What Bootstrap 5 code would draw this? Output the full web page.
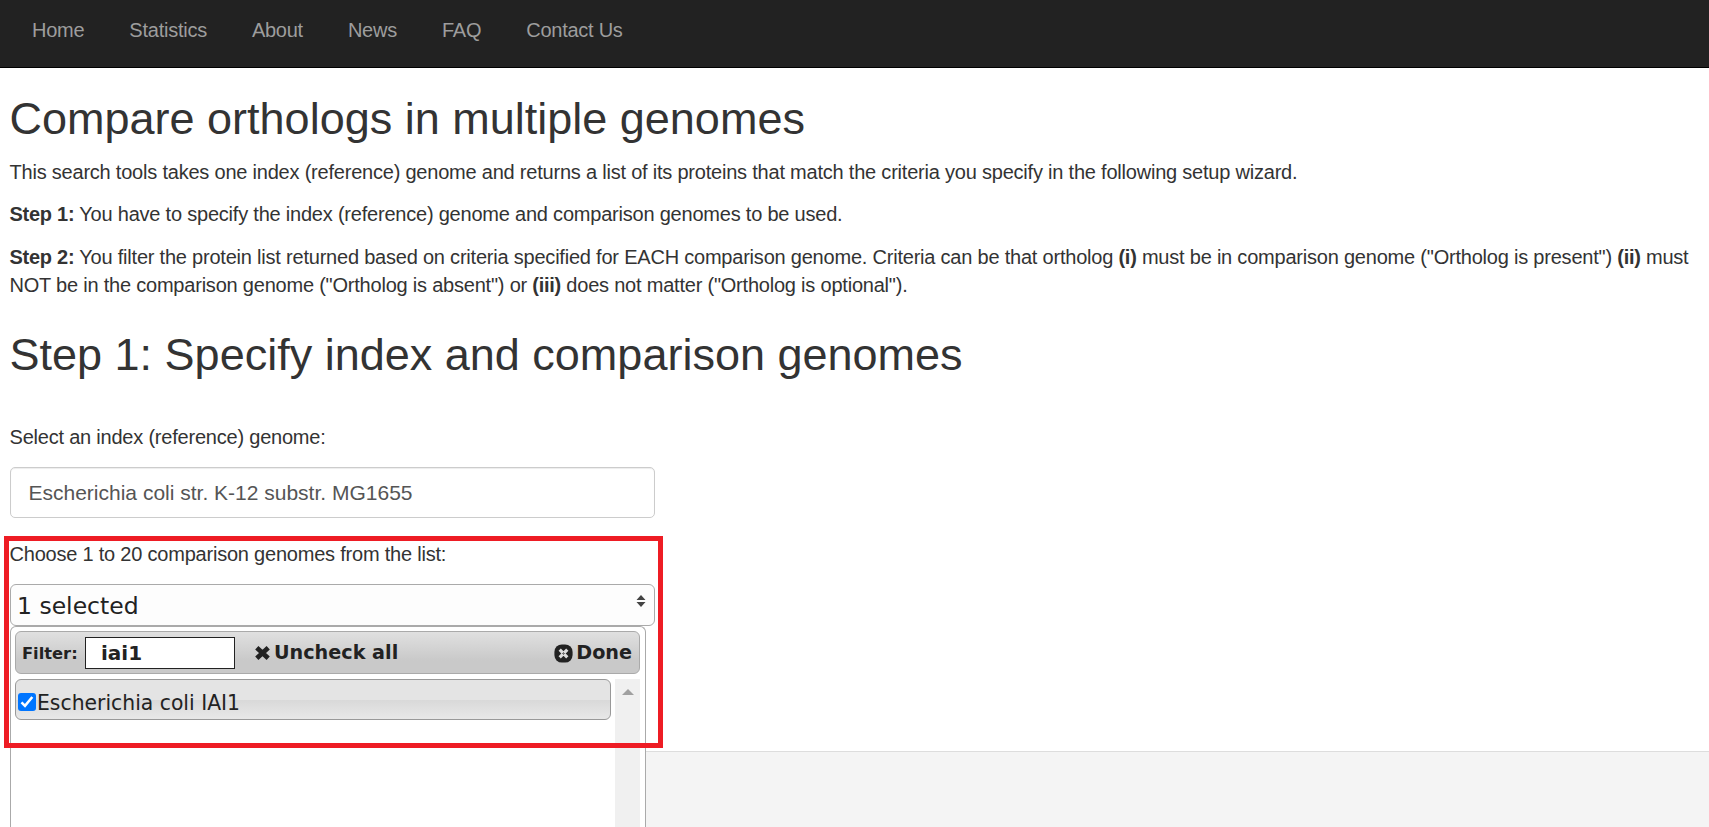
<!DOCTYPE html>
<html lang="en">
<head>
<meta charset="utf-8">
<meta name="viewport" content="width=device-width, initial-scale=1">
<title>Compare orthologs in multiple genomes</title>
<link href="https://cdn.jsdelivr.net/npm/bootstrap@5.3.0/dist/css/bootstrap.min.css" rel="stylesheet">
<style>
html, body { height: 100%; overflow: hidden; }
body { font-family: "Liberation Sans", Arial, sans-serif; font-size: 20px; line-height: 28.57px; color: #333; letter-spacing: -.213px; }
.topbar { background: #222; border-bottom: 1px solid #000; height: 68px; padding: 16px 10px; letter-spacing: -.25px; }
.topbar .nav-link { color: #9d9d9d; padding: 0 22.5px; }
.topbar .nav-link:first-child { padding-left: 22px; }
.page { height: 683px; padding: 26px 10px 0 9.5px; }
h1 { font-size: 45px; line-height: 49.5px; font-weight: 400; letter-spacing: 0; margin: 0 0 14.5px; }
h1.step-title { margin: 30.5px 0 43px; }
p { margin: 0 0 13.75px; }
b { letter-spacing: -.27px; }
.field-label { display: block; margin-bottom: 15.4px; }
.genome.form-control { width: 645px; height: 51px; border: 1px solid #ccc; border-radius: 5px; padding: 2px 17.5px 0; font-size: 21px; color: #555; box-shadow: inset 0 1px 1px rgba(0,0,0,.075); letter-spacing: 0; margin: 0 0 22px .5px; }
.picker { font-family: "DejaVu Sans", Verdana, sans-serif; letter-spacing: 0; color: #222; width: 645px; margin-left: .5px; }
.picked { height: 42px; border: 1px solid #aaa; border-radius: 6px; background: #fdfdfd; font-size: 23.5px; padding: 3px 8px 0 6px; }
.picked svg { margin-bottom: 11px; }
.panel { position: absolute; z-index: 2; top: 42px; left: 0; width: 636px; height: 201px; border: 1px solid #aaa; border-bottom: 0; border-radius: 6px 6px 0 0; background: #fff; padding: 4px 5px 0 4px; }
.bar { height: 43px; border: 1px solid #aaa; border-radius: 6px; background: linear-gradient(#e0e0e0, #c9c9c9 70%); font-size: 19.2px; font-weight: 700; padding: 2px 7px 0 6px; }
.bar .caption { font-size: 16.3px; width: 63px; padding-top: 3px; }
.bar input { font: 700 20px "DejaVu Sans", Verdana, sans-serif; width: 150px; height: 32px; border: 1px solid #222; border-radius: 0; padding: 0 15px; color: #222; background: #fff; }
.uncheck { margin-left: 20px; }
.bar .action { padding-top: 1px; }
.list { margin-top: 5px; }
.option { width: 596px; height: 41px; border: 1px solid #999; border-radius: 6px; background: linear-gradient(#e4e4e4 0 50%, #d9d9d9 52%, #e8e8e8); padding: 8px 0 0 2px; font-size: 20.35px; }
.option svg { margin-right: 1px; margin-top: -3px; }
.scroller { width: 25px; height: 148px; background: #f0f0f0; }
.marker { position: absolute; z-index: 3; left: -6px; top: -48px; width: 659px; height: 212px; border: 5px solid #ee1c24; pointer-events: none; }
.foot { height: 76px; margin-left: 10px; background: #f4f4f4; border-top: 1px solid #ddd; }
</style>
</head>
<body>
<nav class="topbar nav flex-nowrap">
  <a class="nav-link">Home</a>
  <a class="nav-link">Statistics</a>
  <a class="nav-link">About</a>
  <a class="nav-link">News</a>
  <a class="nav-link">FAQ</a>
  <a class="nav-link">Contact Us</a>
</nav>
<main class="page">
  <h1>Compare orthologs in multiple genomes</h1>
  <p>This search tools takes one index (reference) genome and returns a list of its proteins that match the criteria you specify in the following setup wizard.</p>
  <p><b>Step 1:</b> You have to specify the index (reference) genome and comparison genomes to be used.</p>
  <p>
    <b>Step 2:</b> You filter the protein list returned based on criteria specified for EACH comparison genome. Criteria can be that ortholog <b>(i)</b> must be in comparison genome ("Ortholog is present") <b>(ii)</b> must NOT be in the comparison genome ("Ortholog is absent") or <b>(iii)</b> does not matter ("Ortholog is optional").
  </p>
  <h1 class="step-title">Step 1: Specify index and comparison genomes</h1>
  <label class="field-label" for="genome">Select an index (reference) genome:</label>
  <input id="genome" class="form-control genome" value="Escherichia coli str. K-12 substr. MG1655">
  <span class="field-label">Choose 1 to 20 comparison genomes from the list:</span>
  <div class="picker position-relative">
    <div class="picked d-flex align-items-center justify-content-between">
      <span>1 selected</span>
      <svg width="10" height="12" viewBox="0 0 10 12" fill="#444"><path d="M5 0 9.5 5H.5zM5 12 .5 7h9z"/></svg>
    </div>
    <div class="panel">
      <div class="bar d-flex align-items-center">
        <span class="caption">Filter:</span>
        <input value="iai1" aria-label="Filter">
        <span class="uncheck d-flex align-items-center">
          <svg class="me-1" width="15" height="14" viewBox="0 0 15 14" fill="none" stroke="#222" stroke-width="4.8"><path d="M1.8 1.8 13.2 12.2M13.2 1.8 1.8 12.2"/></svg><span class="action">Uncheck all</span>
        </span>
        <span class="ms-auto d-flex align-items-center">
          <svg width="19" height="19" viewBox="0 0 19 19"><rect x=".4" y=".4" width="18.2" height="18.2" rx="7.5" fill="#222"/><path d="M5.7 5.7l7.6 7.6M13.3 5.7l-7.6 7.6" stroke="#ddd" stroke-width="3.2"/><path d="M9.5 8v3M8 9.5h3" stroke="#777"/></svg><span class="action" style="padding-left:3px">Done</span>
        </span>
      </div>
      <div class="list d-flex justify-content-between align-items-start">
        <div class="option d-flex align-items-center">
          <svg width="18" height="18" viewBox="0 0 18 18"><rect width="18" height="18" rx="3" fill="#0075ff"/><path d="M3.5 9.3 7 12.8 14.3 4" fill="none" stroke="#fff" stroke-width="2.6"/></svg>
          <span>Escherichia coli IAI1</span>
        </div>
        <div class="scroller">
          <svg class="d-block mx-auto" width="12" height="16" viewBox="0 0 12 16"><path d="M0 16 6 10l6 6z" fill="#a0a0a0"/></svg>
        </div>
      </div>
    </div>
    <div class="marker"></div>
  </div>
</main>
<footer class="foot"></footer>
<script src="https://cdn.jsdelivr.net/npm/bootstrap@5.3.0/dist/js/bootstrap.bundle.min.js"></script>
</body>
</html>
